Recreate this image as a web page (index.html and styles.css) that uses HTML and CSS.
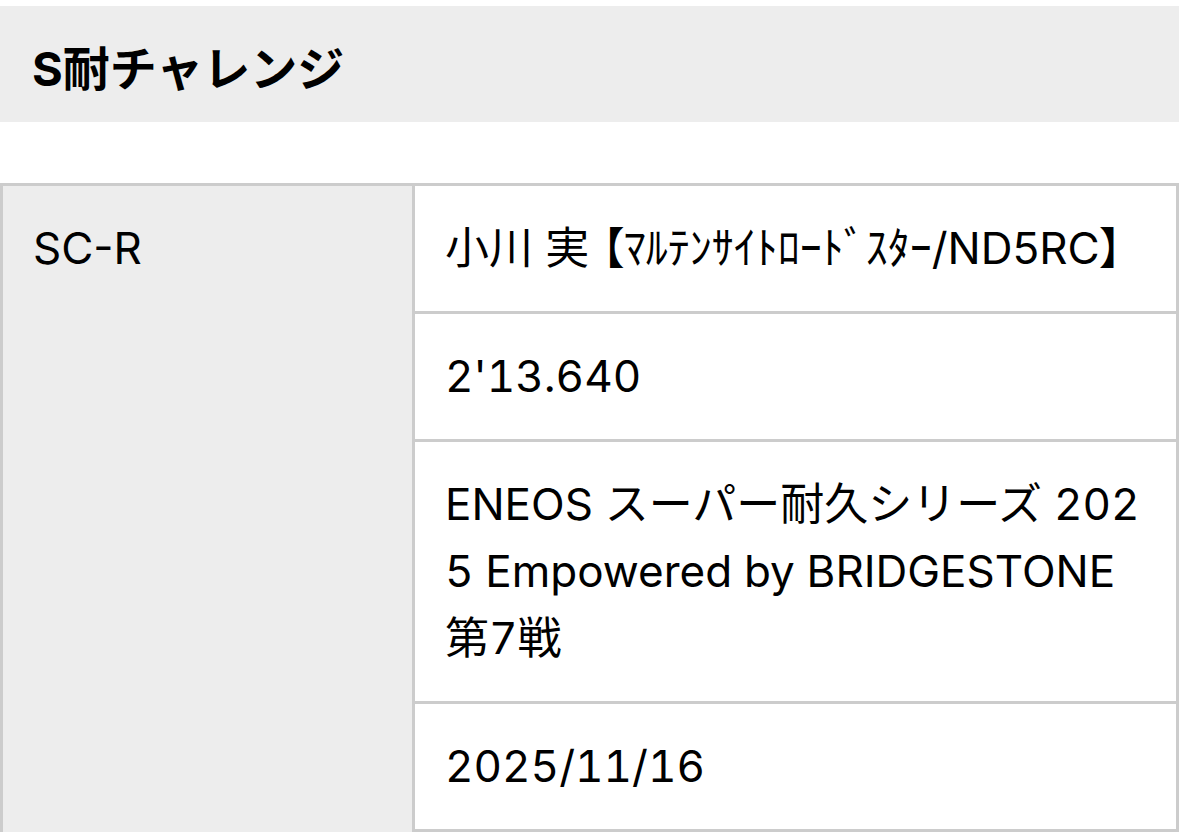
FILE: index.html
```html
<!DOCTYPE html>
<html lang="ja">
<head>
<meta charset="utf-8">
<title>S耐チャレンジ</title>
<link rel="stylesheet" href="styles.css">
</head>
<body>
<header class="title-bar">
  <h1 class="title">S耐チャレンジ</h1>
</header>
<section class="record">
  <div class="label">SC-R</div>
  <div class="value"><span class="driver">小川 実 <span class="bracket">【</span>ﾏﾙﾃﾝｻｲﾄﾛｰﾄﾞｽﾀｰ/ND5RC<span class="bracket">】</span></span></div>
  <div class="value numeric">2'13.640</div>
  <div class="value event">ENEOS スーパー耐久シリーズ 2025 Empowered by BRIDGESTONE 第7戦</div>
  <div class="value numeric">2025/11/16</div>
</section>
</body>
</html>
```
FILE: styles.css
```css
html, body {
  margin: 0;
  padding: 0;
  background: #ffffff;
}
body {
  font-family: Inter, "Noto Sans CJK JP", sans-serif;
  color: #000000;
}
.title-bar {
  margin-top: 6px;
  height: 116px;
  background: #ededed;
  display: flex;
  align-items: center;
  padding: 0 32px;
  box-sizing: border-box;
}
.title {
  margin: 0;
  padding-top: 8px;
  font-size: 47px;
  line-height: 1;
  font-weight: 700;
}
.record {
  margin-top: 61px;
  display: grid;
  grid-template-columns: 412px 1fr;
  border: 3px solid #cccccc;
  border-bottom: none;
}
.label {
  grid-row: 1 / span 4;
  background: #ededed;
  border-right: 3px solid #cccccc;
  padding: 29px 30px;
  font-size: 44px;
  line-height: 67px;
}
.value {
  padding: 29px 34px 29px 30px;
  border-bottom: 3px solid #cccccc;
  font-size: 44px;
  line-height: 67px;
}
.numeric,
.event {
  font-variant-numeric: tabular-nums;
}
.driver {
  white-space: nowrap;
}
.bracket {
  font-feature-settings: "palt";
}
.event {
  word-break: break-all;
}
```
